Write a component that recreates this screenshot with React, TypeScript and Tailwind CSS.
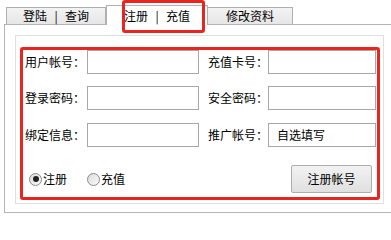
import React from "react";

function Radio({ checked, label }: { checked?: boolean; label: string }) {
  return (
    <div className="flex items-center">
      <div className="w-[13px] h-[13px] rounded-full border border-[#8a8a8a] bg-gradient-to-br from-[#dcdcdc] to-[#fafafa] flex items-center justify-center">
        {checked && <div className="w-[6px] h-[6px] rounded-full bg-[#222]" />}
      </div>
      <span className="ml-[1px] leading-[14px]">{label}</span>
    </div>
  );
}

function Field({ label, value, inputW, labelW, className = "" }: { label: string; value?: string; inputW: string; labelW: string; className?: string }) {
  return (
    <div className={"flex items-center " + className}>
      <div className={labelW + " leading-[14px]"}>{label}</div>
      <div className={inputW + " h-[24px] border border-[#a7a7a7] bg-white flex items-center pl-[8px] leading-[14px]"}>{value}</div>
    </div>
  );
}

export default function App() {
  return (
    <div className="relative w-[391px] h-[217px] overflow-hidden bg-white text-[12px] text-black [font-family:'Noto_Sans_CJK_SC','Noto_Sans',sans-serif]">
      <div className="flex items-end h-[24px] pl-[6px]">
        <div className="w-[100px] h-[17px] border border-b-0 border-[#b0b0b0] bg-gradient-to-b from-[#f3f3f3] to-[#e6e6e6] flex items-center justify-center leading-[14px]">
          <span>登陆</span>
          <span className="w-[18px] text-center">|</span>
          <span>查询</span>
        </div>
        <div className="relative z-10 -mb-px w-[102px] h-[20px] border border-b-0 border-[#b0b0b0] bg-white flex items-center justify-center leading-[14px]">
          <span>注册</span>
          <span className="w-[18px] text-center">|</span>
          <span>充值</span>
        </div>
        <div className="w-[85px] h-[17px] border border-b-0 border-l-0 border-[#b0b0b0] bg-gradient-to-b from-[#f3f3f3] to-[#e6e6e6] flex items-center justify-center leading-[14px]">
          修改资料
        </div>
      </div>

      <div className="ml-[4px] w-[400px] h-[189px] border border-[#b4b4b4] bg-white">
        <div className="ml-[10px] mt-[10px] w-[369px] h-[169px] border border-[#e0e0e0] bg-white">
          <div className="ml-[4px] mt-[11px] w-[360px] h-[153px] border-[3px] border-[#e8251e] rounded-[3px] flex flex-col">
            <div className="flex pl-[2px]">
              <Field label="用户帐号：" labelW="w-[62px]" inputW="w-[112px]" />
              <Field label="充值卡号：" labelW="w-[60px]" inputW="w-[108px]" className="ml-[9px]" />
            </div>
            <div className="flex pl-[2px] mt-[12px]">
              <Field label="登录密码：" labelW="w-[62px]" inputW="w-[112px]" />
              <Field label="安全密码：" labelW="w-[60px]" inputW="w-[108px]" className="ml-[9px]" />
            </div>
            <div className="flex pl-[2px] mt-[13px]">
              <Field label="绑定信息：" labelW="w-[62px]" inputW="w-[112px]" />
              <Field label="推广帐号：" value="自选填写" labelW="w-[60px]" inputW="w-[108px]" className="ml-[9px]" />
            </div>
            <div className="flex items-center mt-[18px] h-[28px] pl-[6px] pr-[5px]">
              <Radio checked label="注册" />
              <div className="ml-[20px]">
                <Radio label="充值" />
              </div>
              <button className="ml-auto w-[81px] h-[28px] border border-[#adadad] rounded-[2px] bg-gradient-to-b from-[#f2f2f2] to-[#e0e0e0] leading-[14px] text-[12px] [font-family:'Noto_Sans_CJK_SC',sans-serif]">
                注册帐号
              </button>
            </div>
          </div>
        </div>
      </div>

      <div className="absolute left-[122px] top-0 w-[83px] h-[33px] border-[3px] border-[#e8251e] rounded-[3px] z-20" />
    </div>
  );
}
